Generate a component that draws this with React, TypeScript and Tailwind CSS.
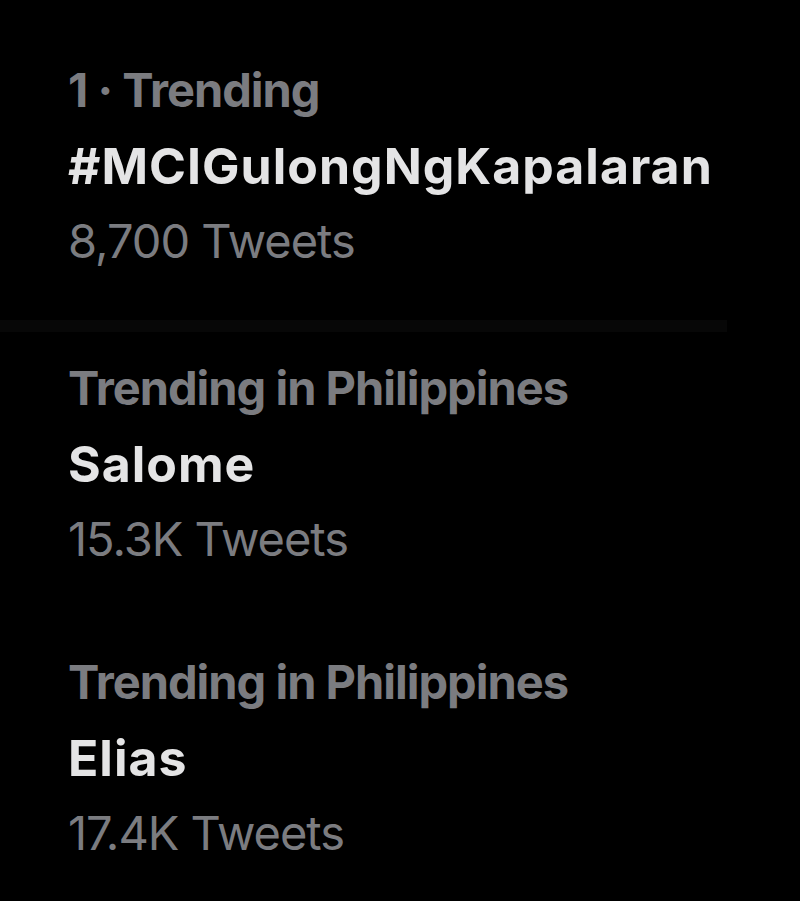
import React from "react";

type Trend = {
    context: string;
    title: string;
    count: string;
};

const trends: Trend[] = [
    { context: "1 · Trending", title: "#MCIGulongNgKapalaran", count: "8,700 Tweets" },
    { context: "Trending in Philippines", title: "Salome", count: "15.3K Tweets" },
    { context: "Trending in Philippines", title: "Elias", count: "17.4K Tweets" },
];

const TrendRow: React.FC<{ trend: Trend }> = ({ trend }) => (
    <div className="flex flex-col px-[68px]">
        <span className="text-[47px] leading-[76px] font-bold text-[#7b7c80] tracking-[-1px]">{trend.context}</span>
        <span className="text-[50px] leading-[76px] font-bold text-[#e4e4e5] tracking-[1px]">{trend.title}</span>
        <span className="text-[47px] leading-[74px] text-[#7b7c80] tracking-[-1px]">{trend.count}</span>
    </div>
);

const App: React.FC = () => {
    return (
        <div className="w-[800px] h-[901px] bg-black overflow-hidden" style={{ fontFamily: "Inter, 'Noto Sans', sans-serif" }}>
            <div className="pt-[52px]">
                <TrendRow trend={trends[0]} />
            </div>
            {/* faint divider */}
            <div className="mt-[42px] h-[12px] w-[727px] bg-[#070707]" />
            <div className="pt-[18px]">
                <TrendRow trend={trends[1]} />
            </div>
            <div className="pt-[68px]">
                <TrendRow trend={trends[2]} />
            </div>
        </div>
    );
};

export default App;
